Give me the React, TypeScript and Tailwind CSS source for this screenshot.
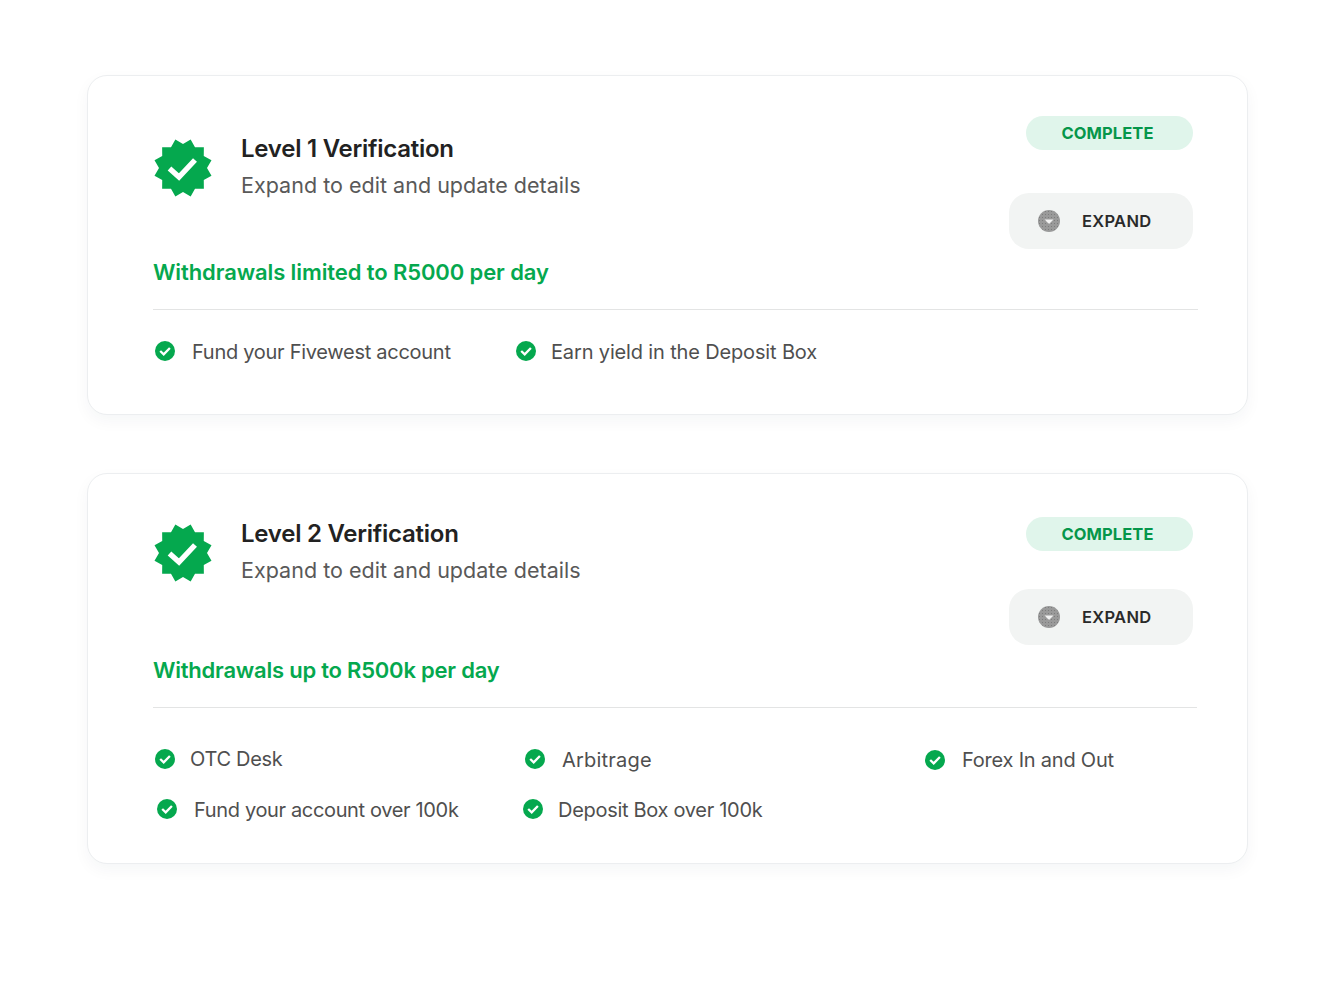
function Badge() {
  const pts: string[] = [];
  const n = 12;
  for (let i = 0; i < n * 2; i++) {
    const r = i % 2 === 0 ? 29.5 : 24;
    const a = (Math.PI * i) / n - Math.PI / 2 + Math.PI / 12;
    pts.push(`${(30 + r * Math.cos(a)).toFixed(2)},${(30 + r * Math.sin(a)).toFixed(2)}`);
  }
  return (
    <svg width="60" height="60" viewBox="0 0 60 60" className="mt-[4px] shrink-0">
      <polygon points={pts.join(" ")} fill="#05A84E" />
      <path d="M16.5 30.5 L26 39 L42 22" fill="none" stroke="#fff" strokeWidth="5.4" />
    </svg>
  );
}

function Check() {
  return (
    <svg width="22" height="22" viewBox="0 0 22 22" className="shrink-0">
      <circle cx="11" cy="11" r="10" fill="#05A84E" />
      <path d="M6.2 11 L9.7 14.4 L15.9 8" fill="none" stroke="#fff" strokeWidth="2.3" />
    </svg>
  );
}

function ExpandIcon({ id }: { id: string }) {
  return (
    <svg width="22" height="22" viewBox="0 0 22 22" className="shrink-0">
      <defs>
        <pattern id={id} width="3" height="3" patternUnits="userSpaceOnUse">
          <rect width="3" height="3" fill="#9a9a9a" />
          <rect x="1" y="1" width="1" height="1" fill="#7d7d7d" />
        </pattern>
      </defs>
      <circle cx="11" cy="11" r="11" fill={`url(#${id})`} />
      <path d="M6.5 9.5 H15.5 L11 14 Z" fill="#f2f2f2" />
    </svg>
  );
}

function Item({ label, className, gap, tracking }: { label: string; className?: string; gap: string; tracking: string }) {
  return (
    <div className={`flex h-[26px] items-center ${gap} ${className ?? ""}`}>
      <Check />
      <span className={`text-[20px] leading-[26px] text-[#4f4f4f] ${tracking}`}>{label}</span>
    </div>
  );
}

function Header({ title, limit, id, topCls, btnCls, limitCls, titleCls }: { title: string; limit: string; id: string; topCls: string; btnCls: string; limitCls: string; titleCls: string }) {
  return (
    <div className={`flex items-start pr-[5px] ${topCls}`}>
      <div className="flex-1">
        <div className={`flex items-start gap-[28px] ${titleCls}`}>
          <Badge />
          <div>
            <div className="text-[24px] leading-[30px] font-semibold tracking-[-0.25px] text-[#222222]">{title}</div>
            <div className="mt-[6px] text-[21.5px] leading-[30px] tracking-[0.02px] text-[#595959]">Expand to edit and update details</div>
          </div>
        </div>
        <div className={`text-[22px] leading-[28px] font-semibold text-[#05A84E] ${limitCls}`}>{limit}</div>
      </div>
      <div className="flex flex-col items-end">
        <div className="flex h-[34px] w-[167px] items-center justify-center rounded-full bg-[#E0F5EB] pr-[4px] text-[16.5px] font-bold tracking-[0.1px] text-[#05964A]">COMPLETE</div>
        <div className={`flex h-[56px] w-[184px] items-center rounded-[20px] bg-[#F2F4F3] pl-[29px] ${btnCls}`}>
          <ExpandIcon id={id} />
          <span className="ml-[22px] text-[16.5px] font-semibold tracking-[0.3px] text-[#2a2a2a]">EXPAND</span>
        </div>
      </div>
    </div>
  );
}

export default function App() {
  return (
    <div className="min-h-[1008px] bg-white px-[87px] pt-[75px] font-['Inter','Liberation_Sans',sans-serif]">
      <div className="h-[340px] w-[1161px] rounded-[20px] border border-[#eceef0] bg-white pl-[65px] pr-[49px] shadow-[0_6px_16px_rgba(30,50,70,0.045)]">
        <Header title="Level 1 Verification" limit="Withdrawals limited to R5000 per day" id="d1" topCls="pt-[40px]" btnCls="mt-[43px]" limitCls="mt-[58px] tracking-[-0.1px]" titleCls="pt-[18px]" />
        <div className="mt-[23px] h-px bg-[#e3e4e4]" />
        <div className="mt-[28px] flex pl-[1px]">
          <Item label="Fund your Fivewest account" gap="gap-[16px]" className="w-[361px]" tracking="mt-[2px] tracking-[-0.28px]" />
          <Item label="Earn yield in the Deposit Box" gap="gap-[14px]" tracking="mt-[2px] tracking-[-0.15px]" />
        </div>
      </div>
      <div className="mt-[58px] h-[391px] w-[1161px] rounded-[20px] border border-[#eceef0] bg-white pl-[65px] pr-[49px] shadow-[0_6px_16px_rgba(30,50,70,0.045)]">
        <Header title="Level 2 Verification" limit="Withdrawals up to R500k per day" id="d2" topCls="pt-[43px]" btnCls="mt-[38px]" limitCls="mt-[71px] tracking-[-0.22px]" titleCls="pt-[2px]" />
        <div className="mt-[23px] mr-[1px] h-px bg-[#e3e4e4]" />
        <div className="mt-[38px] flex flex-col gap-[24px] pl-[1px]">
          <div className="flex">
            <Item label="OTC Desk" gap="gap-[14px]" className="w-[370px]" tracking="tracking-[-0.3px]" />
            <Item label="Arbitrage" gap="gap-[16px]" className="w-[400px]" tracking="mt-[2px] tracking-[0.2px]" />
            <Item label="Forex In and Out" gap="gap-[16px]" className="translate-y-[1px]" tracking="tracking-[-0.22px]" />
          </div>
          <div className="flex">
            <Item label="Fund your account over 100k" gap="gap-[16px]" className="ml-[2px] w-[366px]" tracking="mt-[2px] tracking-[-0.35px]" />
            <Item label="Deposit Box over 100k" gap="gap-[14px]" tracking="mt-[2px] tracking-[-0.3px]" />
          </div>
        </div>
      </div>
    </div>
  );
}
